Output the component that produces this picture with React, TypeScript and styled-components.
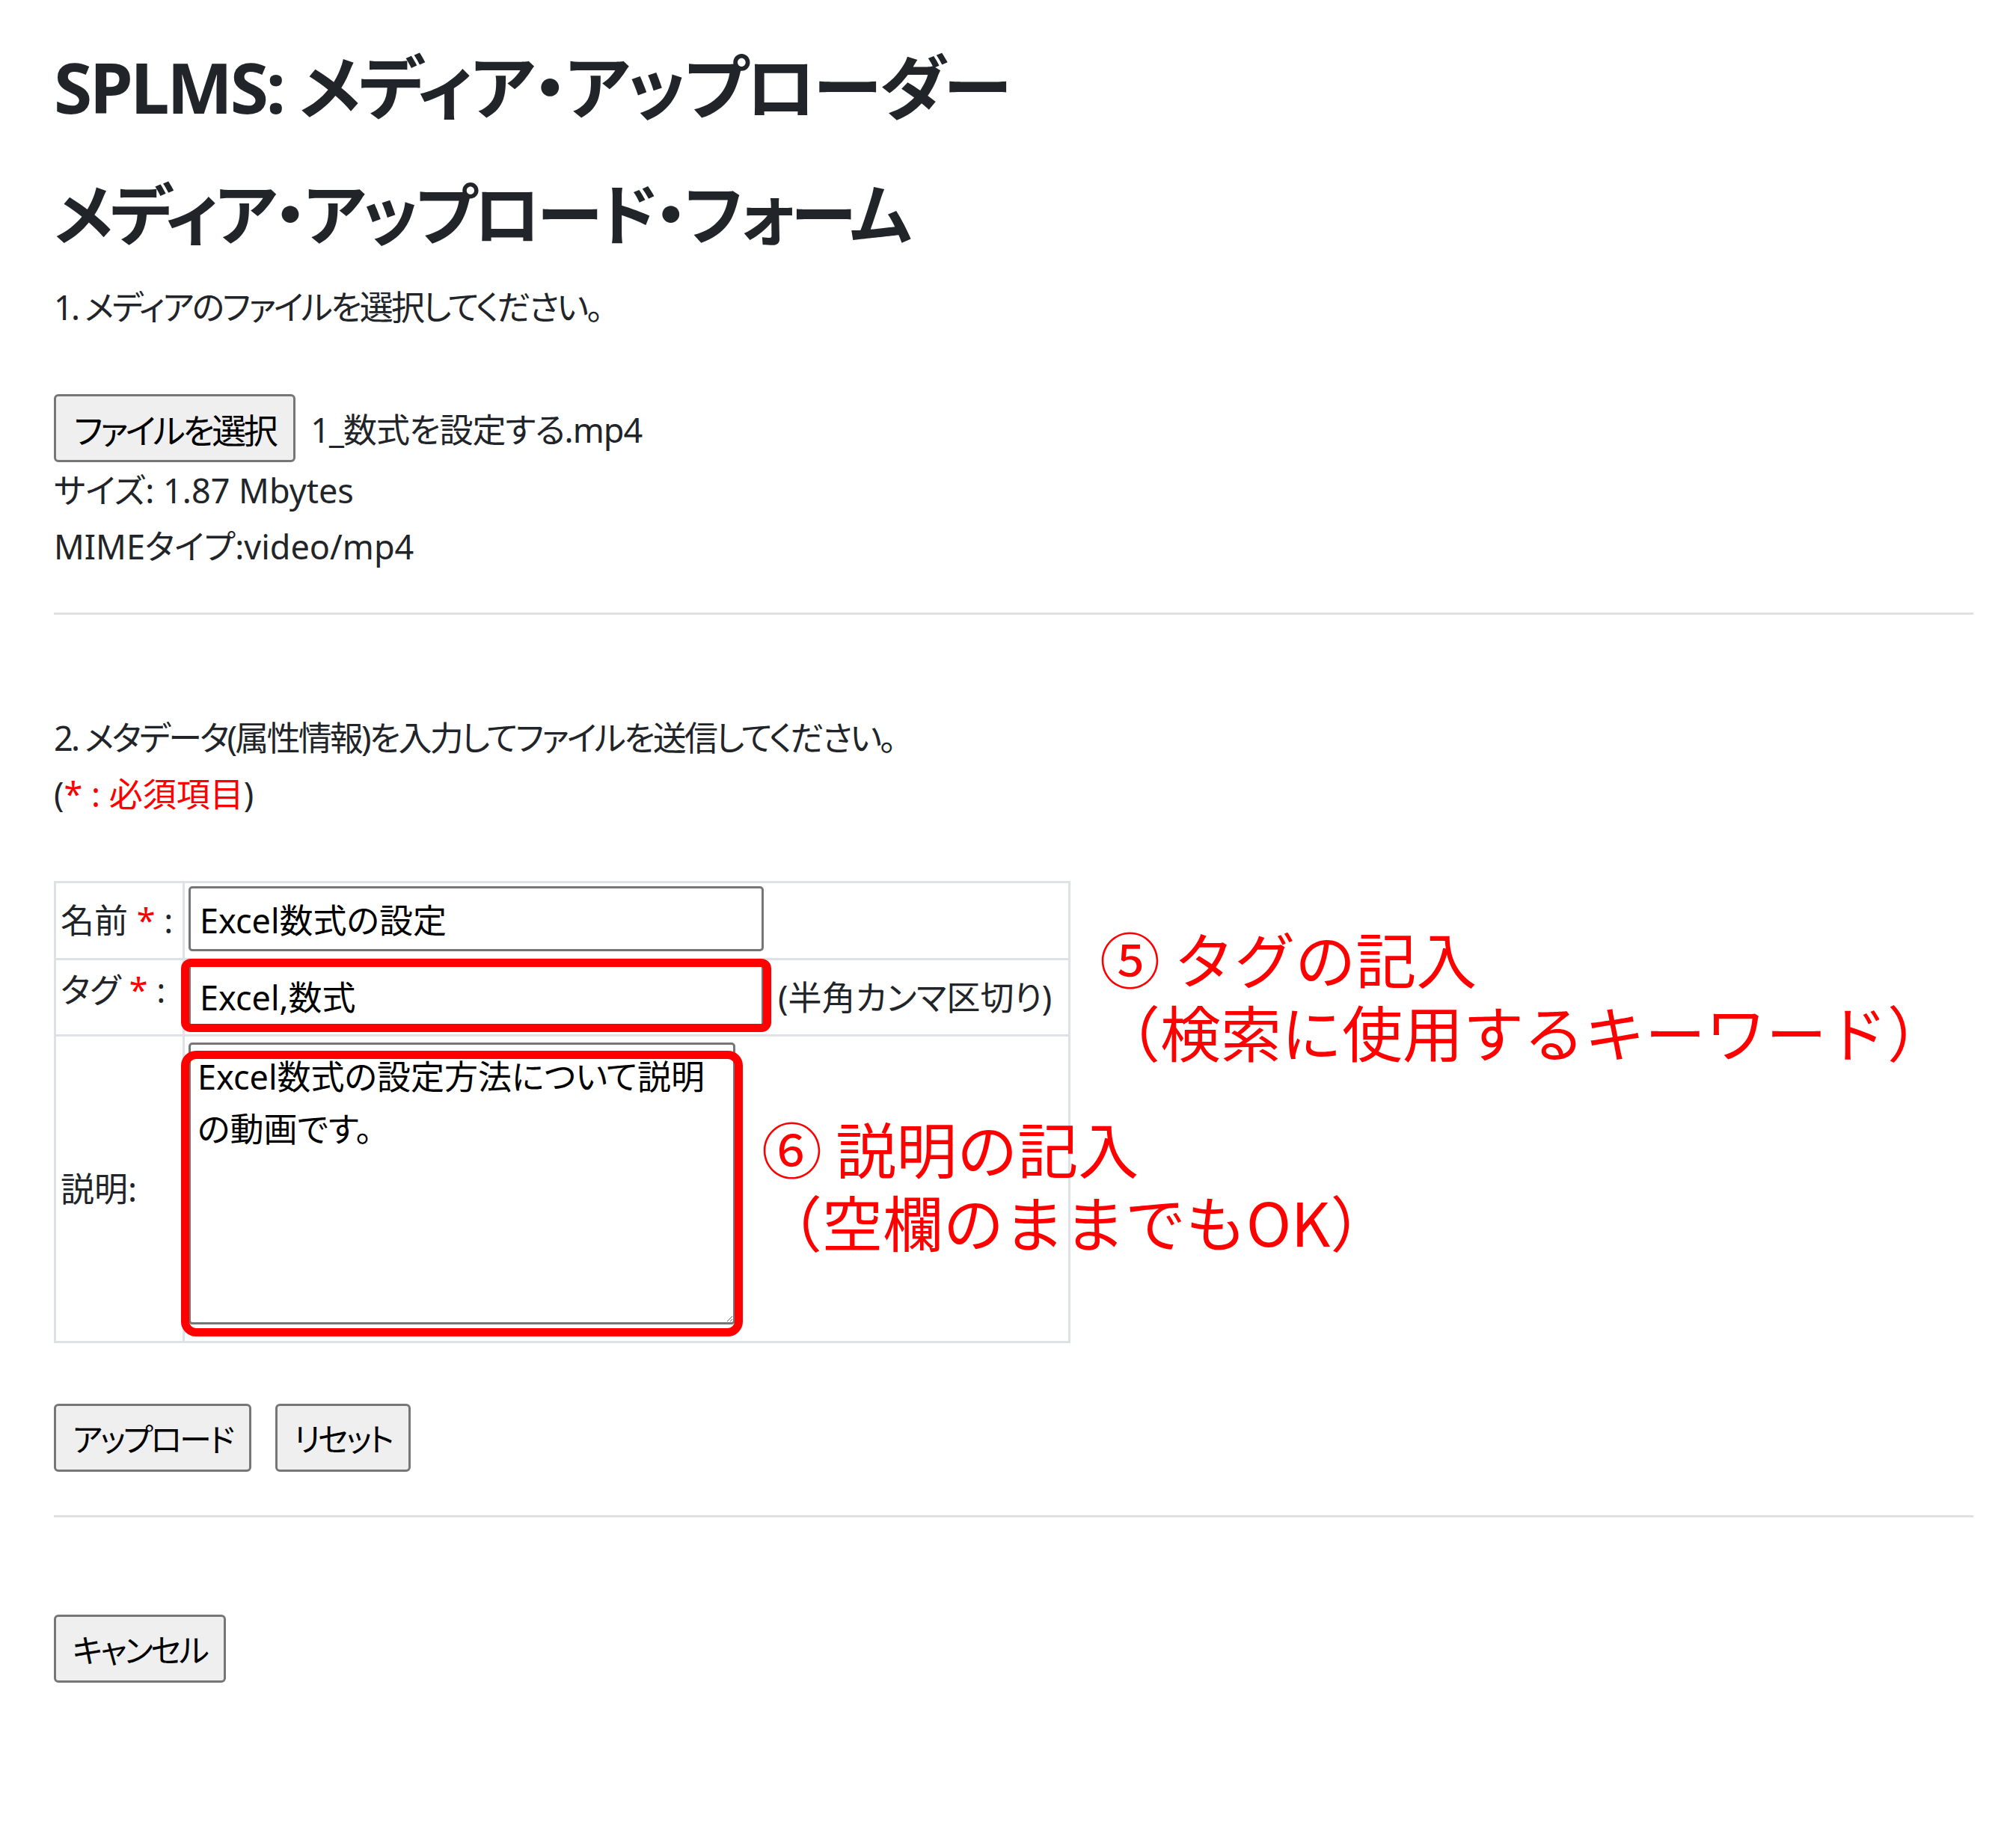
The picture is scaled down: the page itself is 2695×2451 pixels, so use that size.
import * as React from 'react'
import styled, { createGlobalStyle } from 'styled-components'

const colors = {
  text: '#212529',
  red: '#ff0000',
  rule: '#e0e0e0',
  grid: '#dee2e6',
  control: '#767676',
  buttonBg: '#efefef',
}

const GlobalStyle = createGlobalStyle`
  html, body {
    margin: 0;
    background: #ffffff;
  }
  body {
    font-family: "Noto Sans", "Noto Sans CJK JP", sans-serif;
    font-feature-settings: "palt" 1;
    color: ${colors.text};
  }
`

const Page = styled.main`
  padding: 56px 57px 52px 72px;
`

const Title = styled.h1`
  margin: 0;
  font-size: 93px;
  line-height: 120px;
  font-weight: 700;
  letter-spacing: -0.035em;
`

const FormTitle = styled.h2`
  margin: 56px 0 0;
  font-size: 89px;
  line-height: 108px;
  font-weight: 700;
  letter-spacing: -0.05em;
`

const Step = styled.p<{ $mt: number }>`
  margin: ${(p) => p.$mt}px 0 0;
  font-size: 45px;
  line-height: ${(p) => (p.$mt > 100 ? 75 : 67)}px;
  letter-spacing: -2.8px;
`

const InfoLine = styled.div`
  font-size: 45px;
  line-height: 75px;
`

const FileRow = styled.div`
  margin-top: 83px;
  display: flex;
  align-items: center;
  gap: 20px;
`

const NativeButton = styled.button`
  font-family: inherit;
  font-feature-settings: "palt" 1;
  color: #000000;
  background: ${colors.buttonBg};
  border: 3px solid ${colors.control};
  border-radius: 6px;
  margin: 0;
  cursor: default;
`

const FileButton = styled(NativeButton)`
  height: 91px;
  padding: 0 24px;
  font-size: 46px;
  letter-spacing: -3.5px;
`

const FileName = styled.span`
  font-size: 45px;
  letter-spacing: -1px;
`

const Rule = styled.hr<{ $mt: number }>`
  margin: ${(p) => p.$mt}px 0 0;
  border: 0;
  border-top: 3px solid ${colors.rule};
`

const Note = styled.div`
  font-size: 45px;
  line-height: 75px;
`

const Req = styled.span`
  color: ${colors.red};
`

const FormArea = styled.div`
  position: relative;
  margin-top: 79px;
`

const MetaTable = styled.table`
  width: 1359px;
  table-layout: fixed;
  border-collapse: collapse;
  font-size: 45px;
`

const Row = styled.tr<{ $h: number }>`
  height: ${(p) => p.$h}px;
`

const LabelCell = styled.td<{ $lift?: number }>`
  width: 157px;
  padding: 0 6px ${(p) => p.$lift ?? 0}px;
  border: 3px solid ${colors.grid};
  vertical-align: middle;
  white-space: nowrap;
  line-height: 60px;
`

const Star = styled.span`
  color: ${colors.red};
`

const FieldCell = styled.td`
  padding: 4px 5px;
  border: 3px solid ${colors.grid};
  vertical-align: top;
`

const FieldLine = styled.div`
  display: flex;
  align-items: center;
  gap: 19px;
`

const Marked = styled.div`
  position: relative;
  display: inline-flex;
`

const MarkBox = styled.span<{ $inset: string; $radius: number }>`
  position: absolute;
  inset: ${(p) => p.$inset};
  border: 11px solid ${colors.red};
  border-radius: ${(p) => p.$radius}px;
  pointer-events: none;
`

const TextInput = styled.input`
  box-sizing: border-box;
  width: 769px;
  height: 87px;
  margin: 0;
  padding: 0 12px;
  font: inherit;
  font-feature-settings: "palt" 1;
  color: #000000;
  background: #ffffff;
  border: 3px solid ${colors.control};
  border-radius: 5px;
  outline: none;
`

const TextArea = styled.textarea`
  box-sizing: border-box;
  display: block;
  width: 731px;
  height: 377px;
  margin: 4px 0 0;
  padding: 8px 9px;
  font: inherit;
  font-feature-settings: "palt" 1;
  line-height: 70px;
  color: #000000;
  background: #ffffff;
  border: 3px solid ${colors.control};
  border-radius: 5px;
  outline: none;
`

const Hint = styled.span`
  white-space: nowrap;
`

const Callout = styled.div<{ $left: number; $top: number }>`
  position: absolute;
  left: ${(p) => p.$left}px;
  top: ${(p) => p.$top}px;
  font-family: "Noto Sans CJK JP", sans-serif;
  font-feature-settings: normal;
  font-size: 81px;
  line-height: 98px;
  color: ${colors.red};
  white-space: nowrap;
`

const ButtonRow = styled.div`
  margin-top: 81px;
  display: flex;
  gap: 32px;
`

const ActionButton = styled(NativeButton)<{ $mt?: number }>`
  display: block;
  height: 91px;
  margin-top: ${(p) => p.$mt ?? 0}px;
  padding: 0 22px;
  font-size: 43px;
  letter-spacing: -3px;
`

export default function App() {
  return (
    <>
      <GlobalStyle />
      <Page>
        <Title>SPLMS: メディア・アップローダー</Title>
        <FormTitle>メディア・アップロード・フォーム</FormTitle>
        <Step $mt={37}>1. メディアのファイルを選択してください。</Step>

        <FileRow>
          <FileButton type='button'>ファイルを選択</FileButton>
          <FileName>1_数式を設定する.mp4</FileName>
        </FileRow>
        <InfoLine>サイズ: 1.87 Mbytes</InfoLine>
        <InfoLine>MIMEタイプ:video/mp4</InfoLine>

        <Rule $mt={51} />

        <Step $mt={127}>2. メタデータ(属性情報)を入力してファイルを送信してください。</Step>
        <Note>
          (<Req>* : 必須項目</Req>)
        </Note>

        <FormArea>
          <MetaTable>
            <tbody>
              <Row $h={103}>
                <LabelCell>
                  名前 <Star>*</Star> :
                </LabelCell>
                <FieldCell>
                  <TextInput type='text' defaultValue='Excel数式の設定' readOnly />
                </FieldCell>
              </Row>
              <Row $h={102}>
                <LabelCell $lift={20}>
                  タグ <Star>*</Star> :
                </LabelCell>
                <FieldCell>
                  <FieldLine>
                    <Marked>
                      <TextInput type='text' defaultValue='Excel,数式' readOnly />
                      <MarkBox $inset='-6px -10px -5px -10px' $radius={13} />
                    </Marked>
                    <Hint>(半角カンマ区切り)</Hint>
                  </FieldLine>
                </FieldCell>
              </Row>
              <Row $h={410}>
                <LabelCell>説明:</LabelCell>
                <FieldCell>
                  <Marked>
                    <TextArea defaultValue={'Excel数式の設定方法について説明\nの動画です。'} readOnly />
                    <MarkBox $inset='15px -10px -16px -10px' $radius={20} />
                  </Marked>
                </FieldCell>
              </Row>
            </tbody>
          </MetaTable>

          <Callout $left={1398} $top={53}>
            ⑤ タグの記入
            <br />
            （検索に使用するキーワード）
          </Callout>
          <Callout $left={946} $top={307}>
            ⑥ 説明の記入
            <br />
            （空欄のままでもOK）
          </Callout>
        </FormArea>

        <ButtonRow>
          <ActionButton type='button'>アップロード</ActionButton>
          <ActionButton type='button'>リセット</ActionButton>
        </ButtonRow>

        <Rule $mt={58} />

        <ActionButton type='button' $mt={130}>
          キャンセル
        </ActionButton>
      </Page>
    </>
  )
}
